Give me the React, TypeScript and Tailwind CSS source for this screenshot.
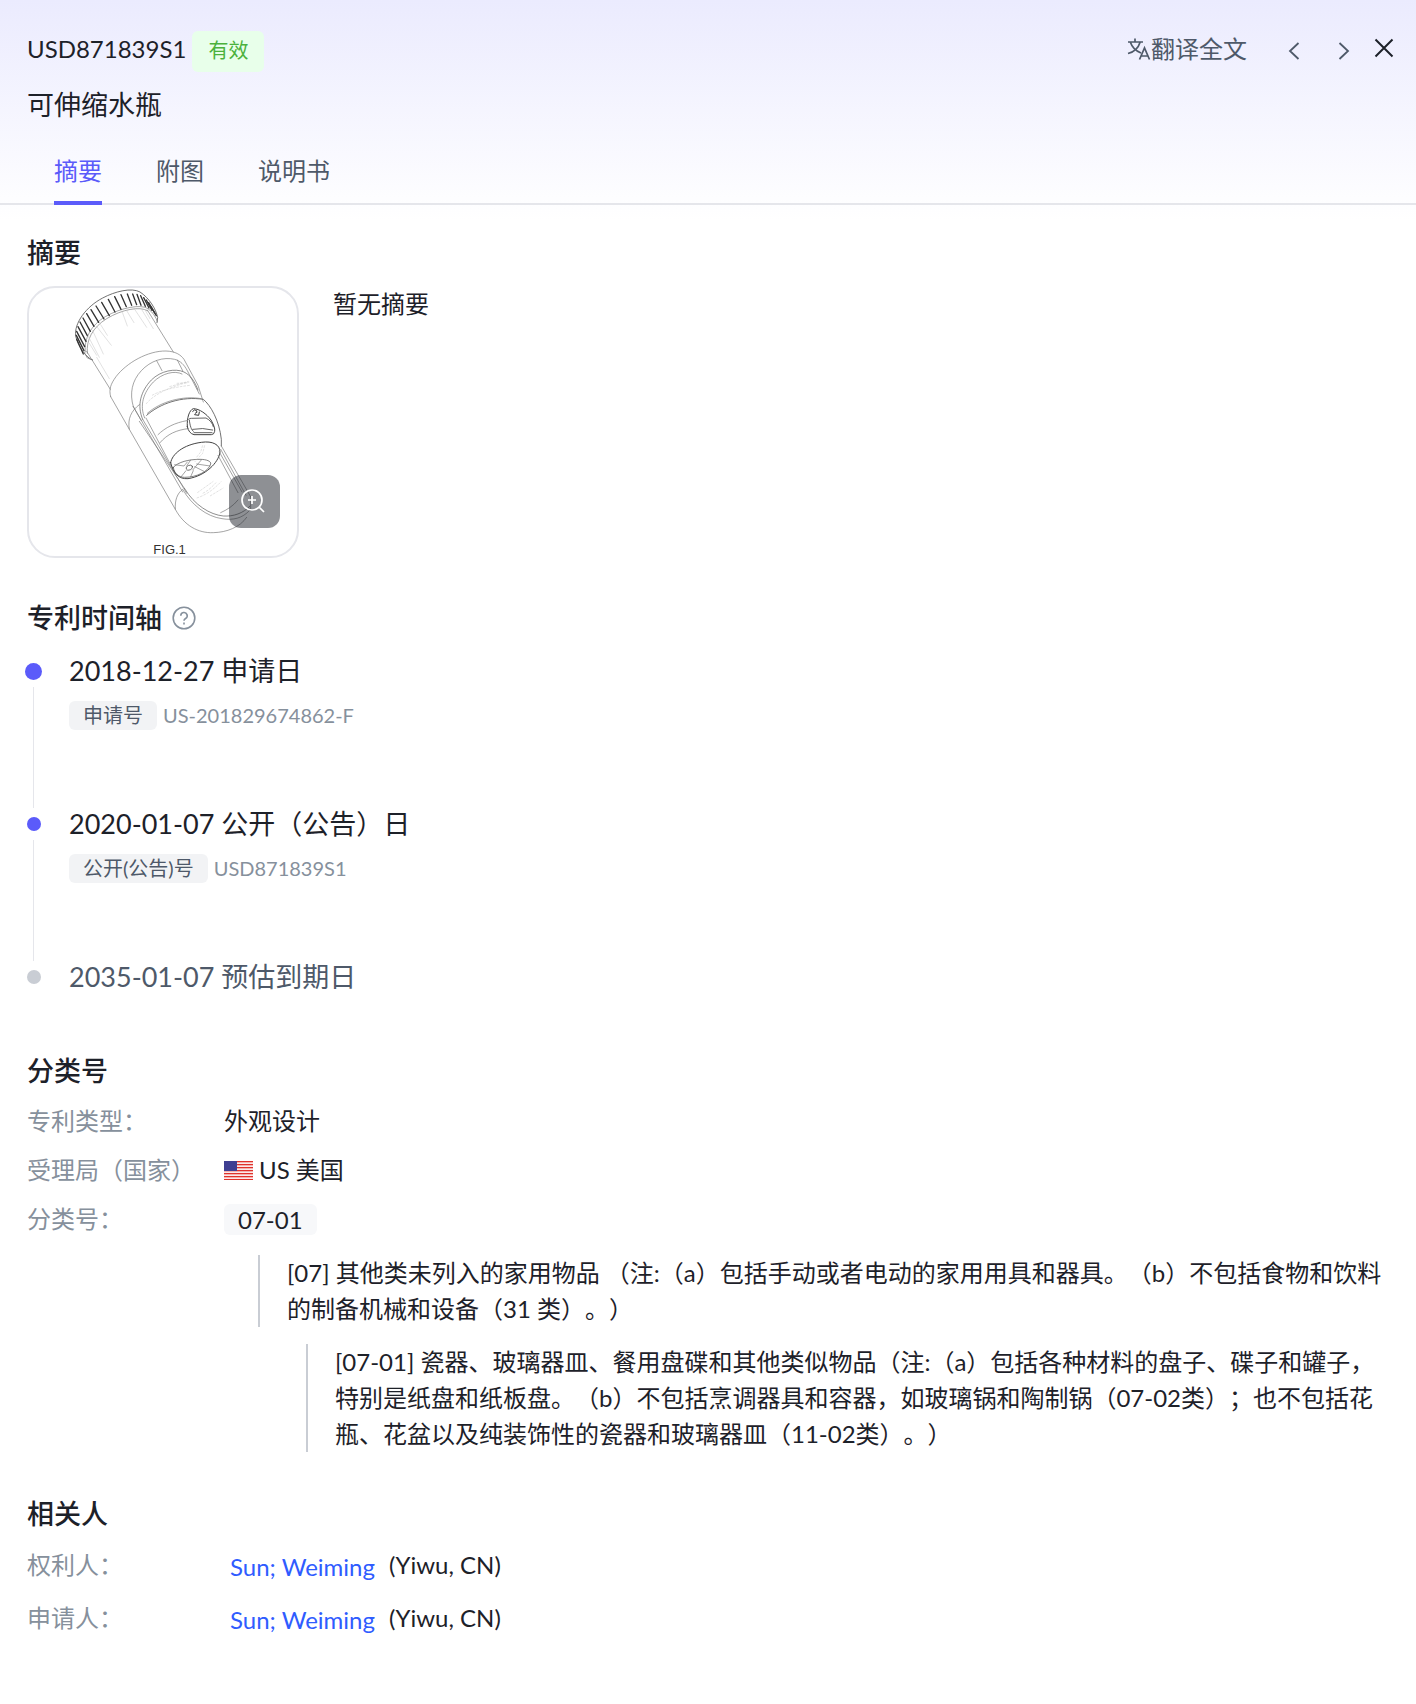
import { useState } from 'react';
import type { ReactNode } from 'react';

const tabs = ['摘要', '附图', '说明书'];

const timeline = [
  { date: '2018-12-27', name: '申请日', label: '申请号', value: 'US-201829674862-F', state: 'first' },
  { date: '2020-01-07', name: '公开（公告）日', label: '公开(公告)号', value: 'USD871839S1', state: 'done' },
  { date: '2035-01-07', name: '预估到期日', label: '', value: '', state: 'pending' },
];

const people = [
  { role: '权利人：', name: 'Sun; Weiming', place: '(Yiwu, CN)' },
  { role: '申请人：', name: 'Sun; Weiming', place: '(Yiwu, CN)' },
];

// short grip ridges around the cap, [x1, y1, x2, y2]
const ridges = [
  [50, 178, 70, 222], [49, 166, 72, 212], [50, 154, 74, 200], [54, 140, 78, 184], [60, 126, 82, 167],
  [69, 114, 91, 154], [80, 101, 102, 139], [93, 89, 116, 127], [108, 78, 132, 117], [125, 67, 148, 107],
  [145, 58, 165, 96], [164, 50, 183, 88], [183, 44, 199, 80], [202, 42, 215, 76], [218, 42, 230, 74],
  [231, 43, 243, 76], [242, 47, 256, 79], [251, 53, 267, 84], [259, 60, 276, 91], [266, 68, 284, 99], [273, 80, 289, 107],
];

const shading = [
  [84, 168, 118, 232], [98, 152, 130, 222], [112, 142, 154, 196], [122, 134, 142, 166], [186, 94, 202, 138],
  [200, 92, 222, 128], [224, 88, 260, 142], [246, 90, 280, 146], [254, 88, 270, 116], [110, 232, 148, 296], [88, 190, 110, 226],
];

function BottleFigure() {
  return (
    <svg viewBox="-93 24 804 804" className="block w-full" role="img" aria-label="FIG.1">
      <g fill="none" stroke="#777" strokeWidth="2" strokeLinecap="round">
        {/* cap */}
        <path d="M97 240 C80 234 54 200 47 168 C42 130 78 80 128 54 C165 34 215 22 240 36 C268 54 288 88 293 112 L291 128" stroke="#555" strokeWidth="2.5" />
        <path d="M76 216 C72 176 92 136 136 110 C184 82 244 72 264 86 C278 96 288 112 292 124" />
        <path d="M82 220 C78 180 98 142 140 116 C186 88 240 78 262 92" />
        <path d="M72 216 L82 234 L98 240" />
        {ridges.map(([x1, y1, x2, y2]) => (
          <line key={`${x1}-${y1}`} x1={x1} y1={y1} x2={x2} y2={y2} stroke="#333" strokeWidth="4" />
        ))}
        {/* neck */}
        <path d="M80 214 L151 328 M262 90 L340 216" />
        {shading.map(([x1, y1, x2, y2]) => (
          <line key={`${x1}-${y1}`} x1={x1} y1={y1} x2={x2} y2={y2} stroke="#c4c4c4" strokeWidth="1.5" />
        ))}
        {/* outer sleeve */}
        <path d="M152 350 C146 328 152 312 168 290 C200 248 264 212 318 213 C346 214 362 224 372 238 L414 316 L430 366" />
        <path d="M152 350 L208 448 L346 688 C372 736 414 760 460 758 C500 757 540 742 560 712" />
        <path d="M220 380 C208 340 216 302 244 272 C272 242 310 230 344 238 C362 243 372 254 382 272 L418 342" />
        <path d="M290 242 L306 272 M352 240 L368 272" />
        <path d="M208 448 C202 416 214 392 238 374 M220 380 L244 422" />
        <path d="M248 418 C230 376 242 334 274 300 C302 272 346 264 372 276 C392 286 404 304 414 330" stroke="#555" />
        <path d="M254 414 C238 376 250 338 280 306 C306 280 344 270 366 282" />
        <path d="M220 380 L368 636 M238 424 L374 626 M248 418 L380 640 M258 414 L336 562" />
        <path d="M346 688 C344 660 352 640 368 628 C394 674 440 710 486 716 C520 722 548 714 568 692" />
        <path d="M374 626 C404 676 450 704 490 708 C520 710 550 700 570 678" stroke="#555" />
        {/* inner cup */}
        <path d="M260 406 C300 370 366 348 430 358 C452 376 478 422 484 478 L484 498" stroke="#555" strokeWidth="2.5" />
        <path d="M262 400 C302 364 370 346 424 356" />
        <path d="M294 464 C316 442 346 428 380 422 M300 488 C322 462 350 450 384 446" />
        <path d="M332 548 C336 522 370 494 424 487 C458 482 480 494 480 516 C476 548 436 588 384 596 C356 598 340 580 332 548 Z" stroke="#444" strokeWidth="3" />
        <path d="M340 562 C354 546 386 538 420 538 C440 538 454 544 452 552 C446 574 410 592 374 592 C356 592 342 580 340 562 Z" stroke="#444" />
        <path d="M344 554 L372 558 L382 546 M362 592 L378 572 M392 540 L380 558 M398 570 L424 540 M392 590 L400 572 M404 560 L432 574 M410 552 L450 558" />
        <ellipse cx="388" cy="563" rx="10" ry="7" transform="rotate(-25 388 563)" stroke="#444" />
        {/* latch */}
        <path d="M382 440 C380 414 388 390 400 386 C418 386 440 402 453 420 C460 432 466 446 464 454 Q462 464 454 464 L402 464 Q386 460 382 440 Z" stroke="#444" strokeWidth="3" />
        <path d="M386 418 Q388 414 394 415 L438 414 C450 420 458 430 460 440 M388 420 C390 438 394 450 400 454 M398 448 Q428 442 458 450 M402 458 L456 458" stroke="#444" strokeWidth="2.500" />
        <path d="M398 394 Q404 386 410 392 Q414 398 406 400 M404 404 L416 406 L418 396" stroke="#333" strokeWidth="3" />
        {/* right rail */}
        <path d="M484 498 L572 650 M478 516 L546 636 M474 526 L534 638 M482 508 L558 646 M572 650 L572 690" />
        <path d="M482 698 C500 690 520 678 534 660" />
      </g>
      <g fill="none" stroke="#c4c4c4" strokeWidth="1.5" strokeDasharray="8 3">
        <path d="M258 372 C280 344 330 320 388 306 M276 346 C306 330 340 322 390 316 M328 320 L386 304 M350 310 L384 308" />
        <path d="M434 496 L428 520 L404 546 M428 496 L422 516 L408 534" />
        <path d="M410 654 C436 646 460 630 484 604 M428 640 C446 632 458 618 470 606 M450 648 L490 624 M412 638 L460 604" />
      </g>
      <text x="280" y="821" fontSize="39" fill="#333" fontFamily="Liberation Sans, sans-serif">FIG.1</text>
    </svg>
  );
}

function UsFlag() {
  return (
    <svg viewBox="0 0 29 19" className="w-[29px] shrink-0" aria-hidden="true">
      <rect width="29" height="19" fill="#fbe9e9" />
      {[0, 3, 6, 9, 12, 15, 18].map((y) => (
        <rect key={y} y={y} width="29" height="1.3" fill="#e0322b" />
      ))}
      <rect width="13" height="10" fill="#3f3f92" />
    </svg>
  );
}

function SectionTitle({ children }: { children: ReactNode }) {
  return <h2 className="text-[27px] leading-10 font-medium">{children}</h2>;
}

export default function App() {
  const [active, setActive] = useState('摘要');

  return (
    <div className="min-h-screen bg-white bg-linear-to-b from-[#ebebfe] to-white bg-size-[100%_220px] bg-no-repeat pb-12 font-[Lato,'Noto_Sans_CJK_SC',sans-serif] text-2xl leading-9 text-[#1d2129] [text-spacing-trim:space-all]">
      <header className="border-b-2 border-[#e5e6eb]">
        <div className="flex items-start justify-between pt-[31px] pr-[22px] pl-[27px]">
          <div className="flex items-start gap-[6px]">
            <span>USD871839S1</span>
            <span className="h-[41px] rounded-md bg-[#e8ffea] px-4 text-xl leading-[38px] text-[#4bb13c]">有效</span>
          </div>
          <div className="flex items-center text-[#4e5969]">
            <button type="button" className="flex items-center">
              <svg viewBox="0 0 24 24" className="size-6" fill="none" stroke="currentColor" strokeWidth="1.7" aria-hidden="true">
                <path d="M1 5h15M8 1.5V5M3.500 5.500C5 10 9 14 14 16M13 5.500C11.500 10.500 7 15 1 16.500M12.500 22.500 17.500 11l5 11.500M14 19h7" />
              </svg>
              翻译全文
            </button>
            <button type="button" aria-label="上一篇" className="ml-[37px] px-1 pt-2 pb-1">
              <svg viewBox="0 0 12 18" className="h-[18px] w-3" fill="none" stroke="currentColor" strokeWidth="1.8" aria-hidden="true">
                <path d="M10.500 1 2 9l8.500 8" />
              </svg>
            </button>
            <button type="button" aria-label="下一篇" className="ml-[30px] px-1 pt-2 pb-1">
              <svg viewBox="0 0 12 18" className="h-[18px] w-3" fill="none" stroke="currentColor" strokeWidth="1.8" aria-hidden="true">
                <path d="M1.500 1 10 9l-8.500 8" />
              </svg>
            </button>
            <button type="button" aria-label="关闭" className="ml-5 pb-0.5 text-[#1d2129]">
              <svg viewBox="0 0 20 20" className="size-5" fill="none" stroke="currentColor" strokeWidth="2" aria-hidden="true">
                <path d="m1.500 1.500 17 17m0-17-17 17" />
              </svg>
            </button>
          </div>
        </div>
        <h1 className="mt-[13px] pl-[27px] text-[27px] leading-10">可伸缩水瓶</h1>
        <nav className="-mb-0.5 flex gap-[54px] px-[54px] pt-7">
          {tabs.map((tab) => (
            <button
              key={tab}
              type="button"
              onClick={() => setActive(tab)}
              className={`border-b-4 pb-3 ${active === tab ? 'border-[#5b5bfa] text-[#5b5bfa]' : 'border-transparent text-[#4e5969]'}`}
            >
              {tab}
            </button>
          ))}
        </nav>
      </header>

      <main className="px-[27px] pt-7">
        <section>
          <SectionTitle>摘要</SectionTitle>
          <div className="mt-[13px] flex gap-[34px]">
            <div className="relative w-[272px] shrink-0 overflow-hidden rounded-[28px] border-2 border-[#e5e6eb] bg-white">
              <BottleFigure />
              <button
                type="button"
                aria-label="放大"
                className="absolute right-[17px] bottom-7 flex h-[53px] w-[51px] items-center justify-center rounded-xl bg-[#1d2129]/50 pr-1 pb-0.5 text-white"
              >
                <svg viewBox="0 0 24 24" className="size-6" fill="none" stroke="currentColor" strokeWidth="1.7" aria-hidden="true">
                  <circle cx="11" cy="11" r="10" />
                  <path d="M11 7v8M7 11h8M18 18l5 5" />
                </svg>
              </button>
            </div>
            <p>暂无摘要</p>
          </div>
        </section>

        <section className="mt-10">
          <div className="flex items-center gap-[10px]">
            <SectionTitle>专利时间轴</SectionTitle>
            <svg viewBox="0 0 24 24" className="size-6 text-[#86909c]" fill="none" stroke="currentColor" strokeWidth="1.6" aria-hidden="true">
              <circle cx="12" cy="12" r="10.800" />
              <path d="M8.800 9.800a3.200 3.200 0 1 1 4.800 2.700c-1 .6-1.600 1.100-1.600 2.300M12 16.500v2" />
            </svg>
          </div>
          <ol className="mt-[13px]">
            {timeline.map((item) => (
              <li key={item.date} className="flex gap-[27px] not-last:h-[153px]">
                <div className="-ml-0.5 flex w-[17px] shrink-0 flex-col items-center">
                  <div className="flex h-10 items-center">
                    {item.state === 'first' && <span className="size-[17px] rounded-full bg-[#5b5bfa]" />}
                    {item.state === 'done' && <span className="size-[14px] rounded-full bg-[#5b5bfa]" />}
                    {item.state === 'pending' && <span className="size-[14px] rounded-full bg-[#c9cdd4]" />}
                  </div>
                  {item.state !== 'pending' && <span className="-mt-1 -mb-[4px] w-px flex-1 bg-[#e5e6eb]" />}
                </div>
                <div className={item.state === 'pending' ? 'text-[#4e5969]' : ''}>
                  <h3 className="text-[27px] leading-10">
                    {item.date} {item.name}
                  </h3>
                  {item.label && (
                    <p className="mt-[10px] flex items-center gap-1.5 text-xl leading-[29px] text-[#86909c]">
                      <span className="rounded-md bg-[#f2f3f5] px-[14px] text-[#4e5969]">{item.label}</span>
                      {item.value}
                    </p>
                  )}
                </div>
              </li>
            ))}
          </ol>
        </section>

        <section className="mt-[54px]">
          <SectionTitle>分类号</SectionTitle>
          <dl className="mt-3 grid grid-cols-[197px_1fr] gap-y-[13px]">
            <dt className="text-[#86909c]">专利类型：</dt>
            <dd>外观设计</dd>
            <dt className="text-[#86909c]">受理局（国家）</dt>
            <dd className="flex items-center gap-1.5">
              <UsFlag />
              US 美国
            </dd>
            <dt className="text-[#86909c]">分类号：</dt>
            <dd className="flex items-center">
              <span className="rounded-md bg-[#f7f8fa] px-[14px] leading-[31px]">07-01</span>
            </dd>
          </dl>
          <div className="mt-[18px] ml-[231px] border-l-2 border-[#c9cdd4] pl-[27px]">
            [07] 其他类未列入的家用物品 （注:（a）包括手动或者电动的家用用具和器具。（b）不包括食物和饮料的制备机械和设备（31 类）。）
          </div>
          <div className="mt-[17px] ml-[279px] border-l-2 border-[#c9cdd4] pl-[27px]">
            [07-01] 瓷器、玻璃器皿、餐用盘碟和其他类似物品（注:（a）包括各种材料的盘子、碟子和罐子，特别是纸盘和纸板盘。（b）不包括烹调器具和容器，如玻璃锅和陶制锅（07-02类）；也不包括花瓶、花盆以及纯装饰性的瓷器和玻璃器皿（11-02类）。）
          </div>
        </section>

        <section className="mt-[42px]">
          <SectionTitle>相关人</SectionTitle>
          <dl className="mt-[13px] grid grid-cols-[203px_1fr] gap-y-[15px]">
            {people.map((p) => (
              <div key={p.role} className="contents">
                <dt className="text-[#86909c]">{p.role}</dt>
                <dd className="flex gap-[14px]">
                  <a href="#person" className="pt-0.5 text-[#2f5cff]">{p.name}</a>
                  <span>{p.place}</span>
                </dd>
              </div>
            ))}
          </dl>
        </section>
      </main>
    </div>
  );
}
